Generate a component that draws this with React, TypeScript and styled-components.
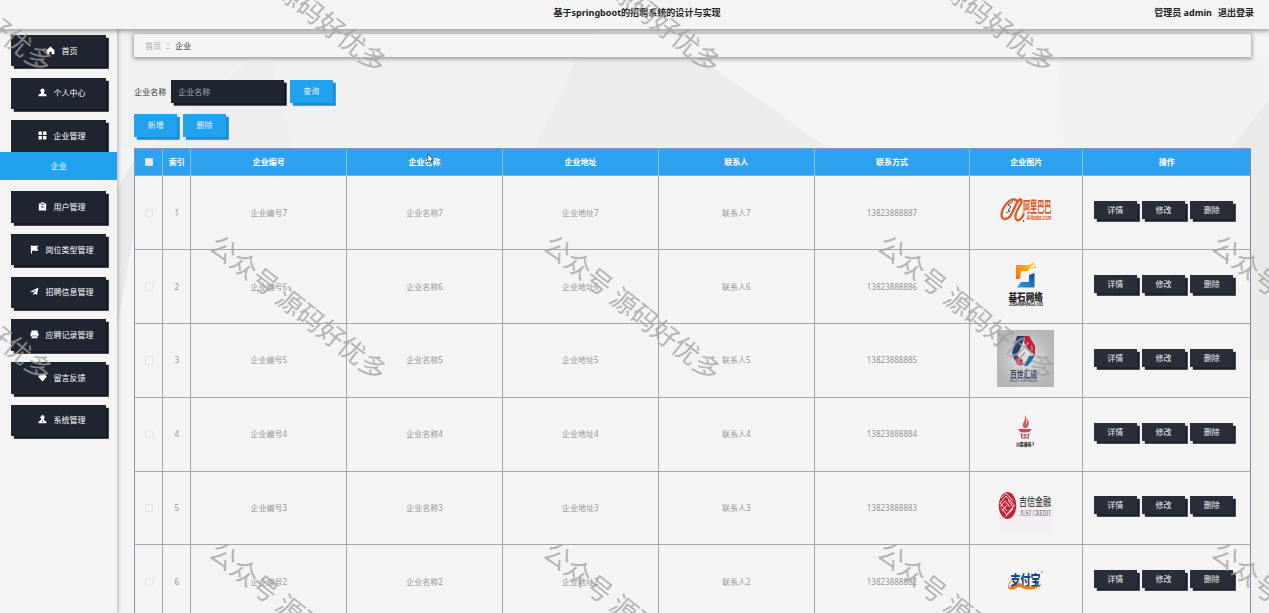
import React from "react";
import styled, { createGlobalStyle } from "styled-components";

const GlobalStyle = createGlobalStyle`
  * { box-sizing: border-box; }
  html, body { margin: 0; padding: 0; overflow: hidden; }
  body {
    font-family: "Noto Sans", "Noto Sans CJK SC", sans-serif;
    font-size: 8px;
    line-height: 1;
    color: #333;
    background: #f4f4f4;
  }
`;

const Page = styled.div`
  position: relative;
  width: 1269px;
  height: 613px;
  overflow: hidden;
  display: flex;
  flex-direction: column;
`;

const Header = styled.header`
  position: relative;
  z-index: 3;
  flex: none;
  height: 29px;
  padding: 0 15px 4px;
  display: grid;
  grid-template-columns: 1fr auto 1fr;
  align-items: center;
  background: #f4f4f4;
  box-shadow: 0 1px 5px 1px rgba(0, 0, 0, 0.38);
  font-size: 9px;
  font-weight: 700;
  color: #222;
  white-space: nowrap;
`;

const Title = styled.h1`
  margin: 0 0 0 5px;
  grid-column: 2;
  font-size: 9.05px;
`;

const Account = styled.div`
  display: flex;
  justify-content: flex-end;
  gap: 6px;
`;

const Body = styled.div`
  flex: 1;
  min-height: 0;
  display: flex;
`;

const Sidebar = styled.nav`
  position: relative;
  z-index: 2;
  flex: none;
  width: 117.3px;
  padding-top: 6px;
  background: #f4f4f4;
  box-shadow: 1px 0 4px rgba(0, 0, 0, 0.28);
`;

const MenuItem = styled.div<{ $open?: boolean }>`
  height: 31.4px;
  margin: 0 11.4px ${(p) => (p.$open ? "0.3px" : "11.3px")} 11.3px;
  padding-left: 6.4px;
  display: flex;
  align-items: center;
  justify-content: center;
  gap: 6.4px;
  color: #fff;
  background: #1f2632;
  box-shadow: 2.8px 2.8px 0 #181b26;
  white-space: nowrap;
`;

const MenuIcon = styled.svg`
  width: 9px;
  height: 9px;
  margin-bottom: 1px;
  display: block;
`;

const SubItem = styled.div`
  position: relative;
  height: 28px;
  margin-bottom: 11.3px;
  display: flex;
  align-items: center;
  justify-content: center;
  color: #fff;
  background: #20a2ee;
`;

const Content = styled.main`
  position: relative;
  flex: 1;
  min-width: 0;
  padding: 5px 18px 0 17px;
  background: #f4f4f4;
`;

const Backdrop = styled.svg`
  position: absolute;
  inset: 0;
  width: 100%;
  height: 100%;
`;

const Stack = styled.div`
  position: relative;
  display: flex;
  flex-direction: column;
`;

const Breadcrumb = styled.div`
  height: 23px;
  padding: 0 11px;
  display: flex;
  align-items: center;
  gap: 5px;
  background: #f4f4f4;
  box-shadow: 0 1px 4px 1px rgba(0, 0, 0, 0.36);
  color: #aaa;
`;

const Current = styled.span`
  color: #333;
`;

const Separator = styled.i`
  width: 4px;
  height: 6px;
  border-top: 1px solid #d2d2d2;
  border-bottom: 1px solid #c4c4c4;
  background: linear-gradient(#d8d8d8, #d8d8d8) center / 3px 1px no-repeat;
`;

const FilterBar = styled.div`
  margin-top: 23px;
  height: 23px;
  display: flex;
  align-items: center;
  white-space: nowrap;
`;

const SearchInput = styled.input`
  width: 113px;
  height: 23px;
  margin: 0 5.6px 0 4.9px;
  padding: 0 7px 1px;
  border: 0;
  font: inherit;
  background: #1f2632;
  box-shadow: 2.7px 2.7px 0 #171a25;
  &::placeholder { color: #a4a7ad; opacity: 1; }
`;

const ToolBar = styled.div`
  margin: 11px 0 11.3px;
  display: flex;
  gap: 5.6px;
`;

const BlueButton = styled.button`
  width: 43px;
  height: 22.5px;
  padding: 0 0 1px;
  border: 0;
  font: inherit;
  color: #e3f4ff;
  background: #20a2ee;
  box-shadow: 2.8px 2.8px 0 #1c8ed6;
`;

const Grid = styled.div`
  width: 1117px;
  border-left: 1px solid #9091a5;
  border-top: 1px solid #8497b6;
`;

const Row = styled.div<{ $head?: boolean }>`
  --rule: ${(p) => (p.$head ? "#8fc3e8" : "#a3a4b2")};
  display: grid;
  grid-template-columns: 28px 28px repeat(4, 155.85px) 155.6px 113px 1fr;
  height: ${(p) => (p.$head ? "27.6px" : "73.8px")};
  color: ${(p) => (p.$head ? "#fff" : "#969696")};
  font-weight: ${(p) => (p.$head ? 700 : 400)};
  background: ${(p) => (p.$head ? "#2ca2f0" : "#f4f4f4")};
`;

const Cell = styled.div`
  display: flex;
  align-items: center;
  justify-content: center;
  border-right: 1px solid var(--rule);
  border-bottom: 1px solid #a3a5b4;
  white-space: nowrap;
  &:last-child { border-right-color: #83859d; }
`;

const Check = styled.i<{ $solid?: boolean }>`
  width: 8.5px;
  height: 8.5px;
  border: 1px solid ${(p) => (p.$solid ? "#d6e6f2" : "#e3e4e6")};
  border-radius: 1px;
  background: ${(p) => (p.$solid ? "#ececef" : "#f4f4f4")};
`;

const Actions = styled.div`
  display: flex;
  gap: 5.3px;
  padding: 0 6.5px 5px 0;
`;

const DarkButton = styled.button`
  width: 43px;
  height: 18px;
  padding: 0;
  border: 0;
  font: inherit;
  color: #eee;
  background: #292e3a;
  box-shadow: 2.8px 2.8px 0 #20242d;
`;

const Logo = styled.svg`
  width: 57px;
  height: 57px;
  margin: 0 1.5px 3.6px 0;
  display: block;
  overflow: visible;
  font-family: "Noto Sans CJK SC", sans-serif;
`;

const Watermark = styled.span<{ $x: number; $y: number }>`
  position: absolute;
  z-index: 5;
  left: ${(p) => p.$x}px;
  top: ${(p) => p.$y}px;
  width: 220px;
  line-height: 30px;
  text-align: center;
  font-family: "Noto Sans CJK SC", sans-serif;
  font-size: 26.3px;
  color: rgba(160, 160, 160, 0.76);
  white-space: nowrap;
  transform: rotate(38.3deg);
  pointer-events: none;
`;

const Pointer = styled.svg`
  position: absolute;
  z-index: 6;
  left: 427px;
  top: 153px;
  width: 7px;
  height: 11px;
`;

const icons: Record<string, React.ReactNode> = {
  home: <path d="M8 1 15 7.5V14.5H10V10H6v4.5H1V7.5Z" />,
  user: <path d="M8 1a4 4 0 0 1 2.500 7V9.700L15 11.500V14.500H1V11.500L5.500 9.700V8A4 4 0 0 1 8 1Z" />,
  grid: <path d="M1 1h6v6H1zM9 1h6v6H9zM1 9h6v6H1zM9 9h6v6H9z" />,
  clip: (
    <>
      <path d="M1.500 2.500H5V1h6v1.500h3.500V15H1.500Z" />
      <path d="m6 7 4 4m0-4-4 4M5 4h6" stroke="#1f2632" strokeWidth="1.300" />
    </>
  ),
  flag: <path d="M1.500 1H3v.5h12L12.500 5.500 15 10H3.500v5h-2Z" />,
  send: <path d="M15 1 12.500 14 8.500 11.500 6 14.500V10.500L12 4 4.500 9.500.5 8Z" />,
  print: (
    <>
      <path d="M2.500 1h11v4H15v6h-2v3.500H3V11H1V5h1.500Z" />
      <path d="M3 10.500h10" stroke="#1f2632" strokeWidth="1" />
    </>
  ),
  gem: <path d="M4 2h8l3.500 4.500L8 15 .5 6.500Z" />,
  admin: (
    <>
      <path d="M8 .5a3.700 3.700 0 0 1 2.300 6.600V8.500L15 12v2.500H1V12l4.700-3.500V7.100A3.700 3.700 0 0 1 8 .5Z" />
      <path d="m8 9-1 4h2Z" fill="#1f2632" />
    </>
  ),
};

const menu = [
  { label: "首页", icon: "home" },
  { label: "个人中心", icon: "user" },
  { label: "企业管理", icon: "grid", child: "企业" },
  { label: "用户管理", icon: "clip" },
  { label: "岗位类型管理", icon: "flag" },
  { label: "招聘信息管理", icon: "send" },
  { label: "应聘记录管理", icon: "print" },
  { label: "留言反馈", icon: "gem" },
  { label: "系统管理", icon: "admin" },
];

const columns = ["索引", "企业编号", "企业名称", "企业地址", "联系人", "联系方式", "企业图片", "操作"];

const logos = [
  <>
    <g fill="none" stroke="#e0561f" strokeLinecap="round" strokeLinejoin="round">
      <path d="M19.500 18.500C14 14 5 25 4.500 33c0 6 7 5 10-1 4-7 5-14 9-14.500" strokeWidth="2.300" />
      <path d="M23.500 17.500c4 2-4 9-5 16-.5 7 5 6 8-1" strokeWidth="2.200" />
    </g>
    <path d="m16 19.500-5 3.500 3 2-3 3 2 1-4 2" fill="none" stroke="#444" strokeWidth=".9" />
    <path d="m26.500 38 .3 2" stroke="#444" />
    <g transform="translate(26 30) scale(1 1.300)">
      <text x="0" y="0" fontSize="11.500" fontWeight="700" fill="#e0561f" textLength="28.500" lengthAdjust="spacingAndGlyphs">阿里巴巴</text>
    </g>
    <text x="29.500" y="38" fontSize="7" fontWeight="700" fill="#e0561f" fontFamily="Liberation Sans, sans-serif" textLength="25" lengthAdjust="spacingAndGlyphs">Alibaba.com</text>
  </>,
  <>
    <defs>
      <linearGradient id="gold" x1="0" y1="1" x2="1" y2="0"><stop stopColor="#ef6d10" /><stop offset="1" stopColor="#ffc914" /></linearGradient>
      <linearGradient id="sea" x1="0" y1="1" x2="1" y2="0"><stop stopColor="#20a9e8" /><stop offset="1" stopColor="#154898" /></linearGradient>
    </defs>
    <path d="M19 9h13l3-2-2 5-2 3h-7l-1 8h-4Z" fill="url(#gold)" />
    <path d="M37.500 17v14.500H20L24 26h8v-7Z" fill="url(#sea)" />
    <path d="M35 7h2v2h-2zm2 3h2v2h-2zm-3 1h2v2h-2zm-1-3h2v2h-2z" fill="#f6c817" />
    <text x="11.500" y="44.500" fontSize="10.500" fontWeight="900" fill="#242424" textLength="34.500" lengthAdjust="spacingAndGlyphs">基石网络</text>
    <text x="12" y="50" fontSize="4.500" fontWeight="700" fontFamily="Liberation Sans, sans-serif" fill="#242424" textLength="34" lengthAdjust="spacingAndGlyphs">JISHIWANGLUO</text>
  </>,
  <>
    <defs>
      <radialGradient id="steel"><stop stopColor="#e0e0e2" /><stop offset="1" stopColor="#b4b6b8" /></radialGradient>
    </defs>
    <path d="M0 0h57v57H0z" fill="url(#steel)" />
    <path d="M20 6h8l-4 11-4 8-5-2Z" fill="#233f69" />
    <path d="M28 6h4l6 10v9l-5-4-6-7Z" fill="#c91d36" />
    <path d="m15 22 5 3 7 10-5-1-5-5Z" fill="#29466f" />
    <path d="m18 29 2 5 4 2 2-6-5-3Z" fill="#d13347" />
    <path d="m27 36 5-10 6-1-4 7-4 4Z" fill="#256c99" />
    <path d="m27 12 2 7 3 5-5-2-4 4 1-7Z" fill="#edf0f4" />
    <text x="13" y="47" fontSize="8.500" fontWeight="700" fill="#3c4565" textLength="27" lengthAdjust="spacingAndGlyphs">百世汇通</text>
    <text x="13" y="52" fontSize="4.500" fontWeight="700" fill="#666e83" fontFamily="Liberation Sans, sans-serif" textLength="27" lengthAdjust="spacingAndGlyphs">BEST EXPRESS</text>
  </>,
  <>
    <path d="M27 24c-4-4 2-6 1-13 3 5 1 6 1 9 2-2 1-4 1-6 2 4 3 6 0 10Z" fill="#d45a61" />
    <path d="M22 25h12l-2 3h-8Z" fill="#c7464f" />
    <path d="M22 25c1 4 10 4 12 0M24 29l1 5m3-4v4m4-5-1 5m-7-3h8m-8 3h8" fill="none" stroke="#c44c54" strokeWidth="1.200" />
    <text x="19" y="42" fontSize="5" fontWeight="900" fill="#333" textLength="15.500" lengthAdjust="spacingAndGlyphs">川菜美味</text>
    <path d="M35.500 38h1.500v3.500h-1.500z" fill="#bf5460" />
  </>,
  <>
    <path d="M2 27h55v27H2z" fill="#f4eff4" />
    <ellipse cx="10.500" cy="27.500" rx="8.800" ry="13.500" fill="#c82231" />
    <path d="m4 20 5-5 7 8m-13 2 6-7 8 9m-14 2 5-6 5 6m-8 4 5-6m-1 10 9-10m-10 12 8-8M9 37l7-7M4 30l6 7m1-15 5 7M3 25l7 8" fill="none" stroke="#f6dce0" strokeWidth="1" />
    <text x="22" y="28" fontSize="11.500" fontWeight="500" fill="#444" textLength="32" lengthAdjust="spacingAndGlyphs">吉信金融</text>
    <text x="23" y="37.500" fontSize="7.500" fill="#555" fontFamily="Liberation Serif, serif" textLength="31" lengthAdjust="spacingAndGlyphs">JUST CREDIT</text>
  </>,
  <>
    <text x="13.500" y="33.500" fontSize="14" fontWeight="900" fill="#164789" textLength="30" lengthAdjust="spacingAndGlyphs">支付宝</text>
    <path d="M22 29c-8-1-14 7-8 7 4 0 7-5 9-4 4 4 14 5 22 1-7 8-19 6-23 2-4 4-10 5-11 1-1-5 6-9 11-7Z" fill="#ef7918" />
    <path d="M44 21h2" stroke="#164789" strokeWidth=".7" />
  </>,
];

const marks = [-145.5, 188.5, 522.5, 856.5, 1190.5].flatMap((x) =>
  [-16, 291.5, 599].map((y) => ({ x, y })),
);

export default function App() {
  return (
    <Page>
      <GlobalStyle />
      <Header>
        <Title>基于springboot的招聘系统的设计与实现</Title>
        <Account>
          <span>管理员 admin</span>
          <span>退出登录</span>
        </Account>
      </Header>
      <Body>
        <Sidebar>
          {menu.map((m) => (
            <React.Fragment key={m.label}>
              <MenuItem $open={!!m.child}>
                <MenuIcon viewBox="0 0 16 16" fill="#fff">{icons[m.icon]}</MenuIcon>
                {m.label}
              </MenuItem>
              {m.child && <SubItem>{m.child}</SubItem>}
            </React.Fragment>
          ))}
        </Sidebar>
        <Content>
          <Backdrop viewBox="117 29 1152 584" preserveAspectRatio="none">
            <path d="M117 29H600L535 148H117Z" fill="#f1f1f1" />
            <path d="M117 190 134 160V230L117 330Z" fill="#e9e9e9" />
            <path d="M247 62H272L292 148H150Z" fill="#eeeeee" />
            <path d="M577 58H700L828 148H535Z" fill="#ececec" />
            <path d="M1058 58H1269V613H1090Z" fill="#f1f1f1" />
            <path d="M1269 100V360H1250V148H1232Z" fill="#eaeaea" />
          </Backdrop>
          <Stack>
            <Breadcrumb>
              首页
              <Separator />
              <Current>企业</Current>
            </Breadcrumb>
            <FilterBar>
              企业名称
              <SearchInput placeholder="企业名称" />
              <BlueButton>查询</BlueButton>
            </FilterBar>
            <ToolBar>
              <BlueButton>新增</BlueButton>
              <BlueButton>删除</BlueButton>
            </ToolBar>
            <Grid>
              <Row $head>
                <Cell><Check $solid /></Cell>
                {columns.map((c) => <Cell key={c}>{c}</Cell>)}
              </Row>
              {logos.map((logo, i) => {
                const n = 7 - i;
                return (
                  <Row key={n}>
                    <Cell><Check /></Cell>
                    <Cell>{i + 1}</Cell>
                    <Cell>企业编号{n}</Cell>
                    <Cell>企业名称{n}</Cell>
                    <Cell>企业地址{n}</Cell>
                    <Cell>联系人{n}</Cell>
                    <Cell>1382388888{n}</Cell>
                    <Cell><Logo viewBox="0 0 57 57">{logo}</Logo></Cell>
                    <Cell>
                      <Actions>
                        <DarkButton>详情</DarkButton>
                        <DarkButton>修改</DarkButton>
                        <DarkButton>删除</DarkButton>
                      </Actions>
                    </Cell>
                  </Row>
                );
              })}
            </Grid>
          </Stack>
        </Content>
      </Body>
      {marks.map((m) => <Watermark key={`${m.x},${m.y}`} $x={m.x} $y={m.y}>公众号 源码好优多</Watermark>)}
      <Pointer viewBox="0 0 7 11">
        <path d="M.8.8v8.200l2-1.600 1.200 2.600 1.200-.6L4.200 7h2.200Z" fill="#fff" stroke="#333" strokeWidth=".8" />
      </Pointer>
    </Page>
  );
}
